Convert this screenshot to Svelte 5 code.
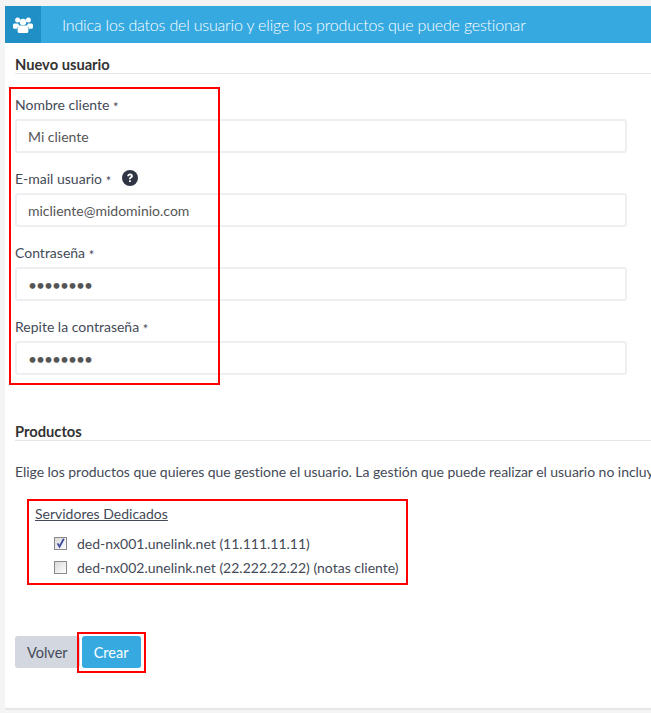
<script>
  const fields = [
    { label: "Nombre cliente", type: "text", value: "Mi cliente" },
    { label: "E-mail usuario", type: "text", value: "micliente@midominio.com", help: true },
    { label: "Contraseña", type: "password", value: "12345678" },
    { label: "Repite la contraseña", type: "password", value: "12345678" },
  ];

  const servers = [
    { name: "ded-nx001.unelink.net (11.111.11.11)", checked: true },
    { name: "ded-nx002.unelink.net (22.222.22.22) (notas cliente)", checked: false },
  ];
</script>

<div class="page">
  <div class="card">
    <div class="header">
      <div class="header-icon">
        <svg width="20" height="16" viewBox="0 0 20 16" fill="#fff">
          <circle cx="4.6" cy="2.9" r="2.5" />
          <circle cx="15.4" cy="2.9" r="2.5" />
          <circle cx="10" cy="5" r="3.3" />
          <path d="M0 8c0-1 .8-1.6 1.6-1.6h3.2c.5.9 1.2 1.6 1.9 2-1.6.5-2.6 1.7-2.7 3.4H1.2C.5 11.8 0 11.3 0 10.6z" />
          <path d="M20 8c0-1-.8-1.6-1.6-1.6h-3.2c-.5.9-1.2 1.6-1.9 2 1.6.5 2.6 1.7 2.7 3.4h2.8c.7 0 1.2-.5 1.2-1.2z" />
          <path d="M6.8 8.6h6.4c1.3 0 2.2 1 2.2 2.4v3.2c0 1-.7 1.8-1.7 1.8H6.3c-1 0-1.7-.8-1.7-1.8V11c0-1.4.9-2.4 2.2-2.4z" />
        </svg>
      </div>
      <div class="header-title">Indica los datos del usuario y elige los productos que puede gestionar</div>
    </div>

    <div class="body">
      <h2 class="section first">Nuevo usuario</h2>

      <div class="fields">
        {#each fields as field}
          <div class="field">
            <div class="label">
              {field.label} <span class="req">*</span>
              {#if field.help}
                <svg class="help" width="16" height="16" viewBox="0 0 16 16">
                  <circle cx="8" cy="8" r="8" fill="#2f3542" />
                  <path d="M5.2 6.2c.1-1.7 1.3-2.6 2.9-2.6 1.6 0 2.8 1 2.8 2.3 0 1.1-.6 1.6-1.4 2.1-.6.4-.8.6-.8 1.2H7c0-1.2.3-1.7 1.1-2.2.6-.4.9-.6.9-1 0-.4-.4-.7-.9-.7-.6 0-1 .4-1.1 1z" fill="#fff" />
                  <rect x="7" y="10.2" width="1.9" height="1.9" rx=".3" fill="#fff" />
                </svg>
              {/if}
            </div>
            <input class="input" class:secret={field.type === "password"} type={field.type} value={field.value} />
          </div>
        {/each}
        <div class="mark mark-fields"></div>
      </div>

      <h2 class="section products">Productos</h2>
      <p class="intro">Elige los productos que quieres que gestione el usuario. La gestión que puede realizar el usuario no incluye la contratación de servicios</p>

      <div class="group">
        <div class="group-title">Servidores Dedicados</div>
        {#each servers as server}
          <div class="server">
            <span class="check">
              {#if server.checked}
                <svg width="11" height="11" viewBox="0 0 11 11">
                  <path d="M2.6 5.4l1.9 3.2L8.8 .8" fill="none" stroke="#3f4c9e" stroke-width="1.8" />
                </svg>
              {/if}
            </span>
            <span>{server.name}</span>
          </div>
        {/each}
        <div class="mark mark-group"></div>
      </div>

      <div class="actions">
        <button class="btn btn-back">Volver</button>
        <div class="create-wrap">
          <button class="btn btn-create">Crear</button>
          <div class="mark mark-create"></div>
        </div>
      </div>
    </div>
  </div>
</div>

<style>
  :global(body) {
    background-color: #f4f4f4;
    overflow: hidden;
  }

  .page {
    width: 651px;
    height: 713px;
    padding: 6px 0 0 5px;
    box-sizing: border-box;
    overflow: hidden;
    font-family: Lato, sans-serif;
    font-size: 14px;
    color: #444a57;
  }

  .card {
    width: 900px;
    height: 704px;
    background-color: #fff;
    border-bottom: 2px solid #e5e6ea;
    border-radius: 3px;
    box-sizing: border-box;
  }

  .header {
    display: flex;
    height: 37px;
    background-color: #36a9e1;
  }

  .header-icon {
    width: 36px;
    display: flex;
    align-items: center;
    justify-content: center;
    background-color: #1f8fc5;
  }

  .header-title {
    margin-left: 21px;
    line-height: 37px;
    font-size: 16px;
    letter-spacing: -0.18px;
    font-weight: 300;
    color: #fff;
    white-space: nowrap;
  }

  .body {
    padding: 0 10px;
  }

  .section {
    margin: 0;
    font-size: 14.7px;
    font-weight: 700;
    color: #333;
    line-height: 18px;
    border-bottom: 1px solid #e5e5e5;
  }

  .section.first {
    margin-top: 12px;
  }

  .section.products {
    margin-top: 47px;
  }

  .fields {
    position: relative;
    padding-top: 21px;
  }

  .field {
    width: 612px;
  }

  .field + .field {
    margin-top: 16px;
  }

  .label {
    height: 24px;
    line-height: 20px;
    position: relative;
  }

  .req {
    position: relative;
    top: 2px;
    font-size: 13px;
  }

  .help {
    position: absolute;
    left: 107px;
    top: 1px;
  }

  .input {
    display: block;
    width: 100%;
    height: 34px;
    box-sizing: border-box;
    padding: 0 11px;
    border: 2px solid #eeeff2;
    border-radius: 3px;
    background: #fff;
    font-family: Lato, sans-serif;
    font-size: 14px;
    color: #555;
    outline: none;
  }

  .input.secret {
    padding-top: 2px;
    font-size: 15.5px;
    letter-spacing: -1px;
  }

  .mark {
    position: absolute;
    border: 2px solid #f00;
    box-sizing: border-box;
    pointer-events: none;
  }

  .mark-fields {
    left: -6px;
    top: 13px;
    width: 211px;
    height: 298px;
  }

  .intro {
    margin: 21px 0 0;
    line-height: 20px;
    letter-spacing: -0.04px;
    white-space: nowrap;
  }

  .group {
    position: relative;
    margin-top: 22px;
    padding-left: 20px;
  }

  .group-title {
    line-height: 20px;
    text-decoration: underline;
    margin-bottom: 7px;
  }

  .server {
    display: flex;
    align-items: center;
    height: 24px;
    padding-left: 19px;
  }

  .check {
    width: 13px;
    height: 13px;
    margin-right: 10px;
    box-sizing: border-box;
    border: 1px solid #8a8a8a;
    background: linear-gradient(135deg, #d8d8d8, #fff);
    display: flex;
    align-items: center;
    justify-content: center;
  }

  .mark-group {
    left: 12px;
    top: -5px;
    width: 381px;
    height: 86px;
  }

  .actions {
    display: flex;
    margin-top: 57px;
  }

  .btn {
    height: 32px;
    border: none;
    border-radius: 3px;
    font-family: Lato, sans-serif;
    font-size: 14.5px;
    padding: 0 12px;
  }

  .btn-back {
    background-color: #d3d7df;
    color: #444a57;
  }

  .create-wrap {
    position: relative;
    margin-left: 2px;
  }

  .btn-create {
    background-color: #36a9e1;
    color: #fff;
    width: 59px;
  }

  .mark-create {
    left: -5px;
    top: -4px;
    width: 69px;
    height: 41px;
  }
</style>
